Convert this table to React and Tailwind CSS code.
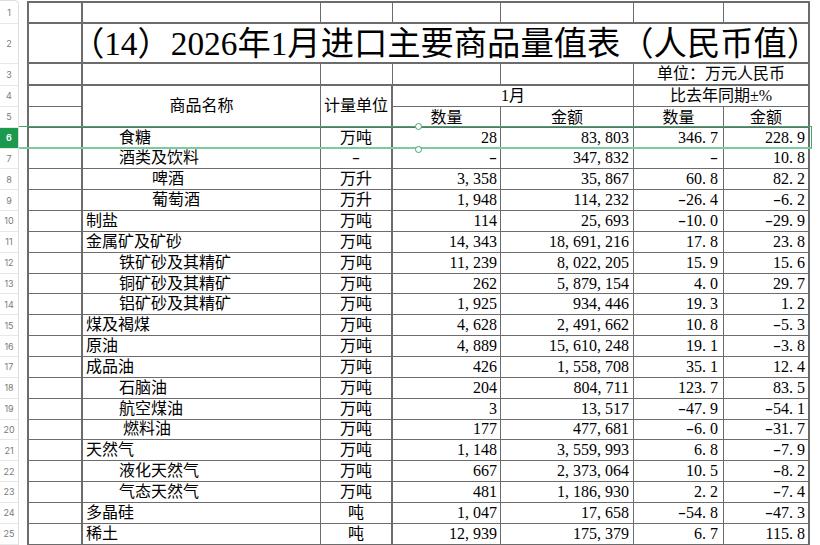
import React from "react";

const rows = [
  ["食糖", 1, "万吨", "28", "83,803", "346.7", "228.9"],
  ["酒类及饮料", 1, "-", "-", "347,832", "-", "10.8"],
  ["啤酒", 2, "万升", "3,358", "35,867", "60.8", "82.2"],
  ["葡萄酒", 2, "万升", "1,948", "114,232", "-26.4", "-6.2"],
  ["制盐", 0, "万吨", "114", "25,693", "-10.0", "-29.9"],
  ["金属矿及矿砂", 0, "万吨", "14,343", "18,691,216", "17.8", "23.8"],
  ["铁矿砂及其精矿", 1, "万吨", "11,239", "8,022,205", "15.9", "15.6"],
  ["铜矿砂及其精矿", 1, "万吨", "262", "5,879,154", "4.0", "29.7"],
  ["铝矿砂及其精矿", 1, "万吨", "1,925", "934,446", "19.3", "1.2"],
  ["煤及褐煤", 0, "万吨", "4,628", "2,491,662", "10.8", "-5.3"],
  ["原油", 0, "万吨", "4,889", "15,610,248", "19.1", "-3.8"],
  ["成品油", 0, "万吨", "426", "1,558,708", "35.1", "12.4"],
  ["石脑油", 1, "万吨", "204", "804,711", "123.7", "83.5"],
  ["航空煤油", 1, "万吨", "3", "13,517", "-47.9", "-54.1"],
  ["燃料油", 3, "万吨", "177", "477,681", "-6.0", "-31.7"],
  ["天然气", 0, "万吨", "1,148", "3,559,993", "6.8", "-7.9"],
  ["液化天然气", 1, "万吨", "667", "2,373,064", "10.5", "-8.2"],
  ["气态天然气", 1, "万吨", "481", "1,186,930", "2.2", "-7.4"],
  ["多晶硅", 0, "吨", "1,047", "17,658", "-54.8", "-47.3"],
  ["稀土", 0, "吨", "12,939", "175,379", "6.7", "115.8"],
];

const indent = ["pl-[3px]", "pl-[36px]", "pl-[69px]", "pl-[40px]"];

function Num({ v }) {
  return v.split("").map((ch, i) => {
    if (ch === "," || ch === ".")
      return <span key={i} className="inline-block w-2">{ch}</span>;
    if (ch === "-")
      return <span key={i} className="inline-block w-2 scale-x-150 text-center">{ch}</span>;
    return <React.Fragment key={i}>{ch}</React.Fragment>;
  });
}

function C({ className = "", children }) {
  return (
    <div className={`flex items-center overflow-hidden whitespace-nowrap border-b border-r border-[#6c6c6c] ${className}`}>
      {children}
    </div>
  );
}

const rowHeights = ["h-[23px]", "h-[40px]", "h-[22px]"];

export default function App() {
  const labels = Array.from({ length: 25 }, (_, i) => i + 1);
  return (
    <div className="relative h-[545px] w-[820px] overflow-hidden bg-white font-['Liberation_Serif','Noto_Sans_CJK_SC',serif] text-[16px] leading-none text-black">
      <div className="flex">
        {/* row numbers */}
        <div className="w-[19px] shrink-0 rounded-tr-[5px] border-r border-t border-[#dedede] font-['Inter',sans-serif] text-[9px] text-[#7a7a7a]">
          {labels.map((n) => (
            <div
              key={n}
              className={`flex items-center justify-center border-b border-[#e8e8e8] ${
                rowHeights[n - 1] || "h-[20.85px]"
              } ${n === 6 ? "bg-[#1b9a4f] font-semibold text-white" : ""}`}
            >
              {n}
            </div>
          ))}
        </div>

        {/* sheet */}
        <div className="ml-[8px] mt-[1px] grid grid-cols-[54px_238px_72px_108px_133px_90px_86px] grid-rows-[21px_40px_22px_repeat(22,20.85px)] border-l-2 border-t-2 border-[#6c6c6c]">
          {/* row 1 */}
          <C className="border-b-2 border-r-2" />
          <C className="border-b-2" />
          <C className="border-b-2" />
          <C className="border-b-2" />
          <C className="border-b-2" />
          <C className="border-b-2" />
          <C className="border-b-2 border-r-2" />

          {/* row 2 */}
          <C className="border-b-2 border-r-2" />
          <div className="col-span-6 flex items-center justify-center whitespace-nowrap border-b-2 border-r-2 border-[#6c6c6c] text-[33.3px] leading-[33px]">
            （14）2026年1月进口主要商品量值表（人民币值）
          </div>

          {/* row 3 */}
          <C className="border-b-2 border-r-2" />
          <C className="border-b-2" />
          <C className="border-b-2" />
          <C className="border-b-2" />
          <C className="border-b-2" />
          <C className="col-span-2 justify-center border-b-2 border-r-2">单位：万元人民币</C>

          {/* row 4-5 header */}
          <C className="border-r-2" />
          <C className="row-span-2 justify-center">商品名称</C>
          <C className="row-span-2 justify-center border-r-2">计量单位</C>
          <C className="col-span-2 justify-center">1月</C>
          <C className="col-span-2 justify-center border-r-2">比去年同期±%</C>
          <C className="border-r-2" />
          <C className="justify-center pt-[3px]">数量</C>
          <C className="justify-center pt-[3px]">金额</C>
          <C className="justify-center pt-[3px]">数量</C>
          <C className="justify-center border-r-2 pt-[3px]">金额</C>

          {rows.map(([name, lvl, unit, q, a, qp, ap]) => (
            <React.Fragment key={name}>
              <C className="border-r-2" />
              <C className={indent[lvl]}>{name}</C>
              <C className="justify-center border-r-2">
                {unit === "-" ? <Num v={unit} /> : unit}
              </C>
              <C className="justify-end pr-[3px]"><Num v={q} /></C>
              <C className="justify-end pr-[4px]"><Num v={a} /></C>
              <C className="justify-end pr-[5px]"><Num v={qp} /></C>
              <C className="justify-end border-r-2 pr-[3px]"><Num v={ap} /></C>
            </React.Fragment>
          ))}
        </div>
      </div>

      {/* selection of row 6 */}
      <div className="pointer-events-none absolute left-[19px] top-[126px] h-[23px] w-[793px] border-b-2 border-r border-t border-[#3ea86a] border-b-[#7ccb9c]" />
      <div className="absolute left-[415px] top-[123px] h-[7px] w-[7px] rounded-full border-[1.5px] border-[#3ea86a] bg-white" />
      <div className="absolute left-[415px] top-[146px] h-[7px] w-[7px] rounded-full border-[1.5px] border-[#3ea86a] bg-white" />
    </div>
  );
}
